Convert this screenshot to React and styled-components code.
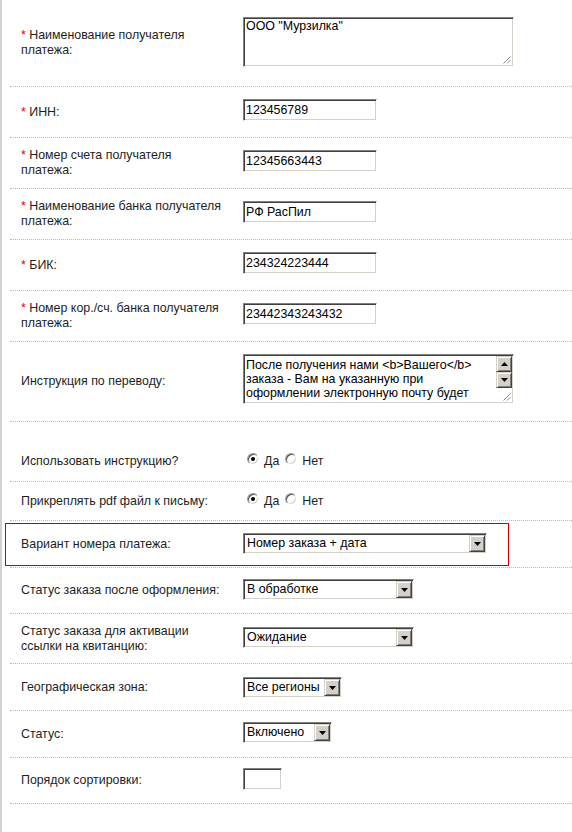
import React from 'react';
import styled, { createGlobalStyle, css } from 'styled-components';

const FONT = '"Liberation Sans", Arial, sans-serif';
const SIZE = '12.4px';

const Global = createGlobalStyle`
  html, body { margin: 0; padding: 0; background: #fff; }
  body {
    font-family: ${FONT};
    font-size: ${SIZE};
    color: #1e1e1e;
  }
  * { box-sizing: border-box; }
`;

const sunken = css`
  border: 1px solid;
  border-color: #808080 #fff #fff #808080;
  box-shadow: inset 1px 1px #404040, inset -1px -1px #d4d0c8;
  background: #fff;
`;

const raised = css`
  background: #d4d0c8;
  border: 1px solid;
  border-color: #d4d0c8 #404040 #404040 #d4d0c8;
  box-shadow: inset 1px 1px #fff, inset -1px -1px #808080;
`;

const Page = styled.div`
  width: 572px;
  min-height: 832px;
  border-left: 2px solid #d2d2d2;
  padding-left: 8px;
`;

const Shell = styled.div`
  border-bottom: 1px dotted #b8b8b8;
  padding: ${p => (p.$highlight ? '2px 0 1px' : '0')};
`;

const Cells = styled.div`
  display: grid;
  grid-template-columns: 222px 1fr;
  align-items: center;
  padding-left: 11px;
  padding-top: ${p => p.$extra || 0}px;
  ${p => p.$highlight && css`
    margin-left: -5px;
    margin-right: 63px;
    border: 1px solid #d40000;
    padding-left: 15px;
  `}
`;

const Label = styled.div`
  line-height: 15px;
  white-space: nowrap;
  color: #1e1e1e;
`;

const Star = styled.span`
  color: #ee0000;
`;

const Field = styled.div`
  display: flex;
  align-items: center;
  padding-top: ${p => p.$pt}px;
  padding-bottom: ${p => p.$pb}px;
`;

const TextInput = styled.input`
  ${sunken};
  width: ${p => p.$w}px;
  height: 22px;
  margin: 0;
  padding: 0 2px;
  font: ${SIZE} ${FONT};
  color: #000;
  outline: none;
`;

const AreaBox = styled.div`
  ${sunken};
  position: relative;
  display: flex;
  width: 271px;
  height: 50px;
  padding: 1px;
`;

const Area = styled.textarea`
  flex: 1;
  border: 0;
  margin: 0;
  padding: ${p => p.$pt}px 3px 0 1px;
  resize: none;
  overflow: hidden;
  background: transparent;
  outline: none;
  font: ${SIZE}/14px ${FONT};
  color: #000;
`;

const ScrollCol = styled.div`
  width: 16px;
  display: flex;
  flex-direction: column;
`;

const ScrollBtn = styled.div`
  ${raised};
  width: 16px;
  height: 16px;
  display: flex;
  align-items: center;
  justify-content: center;
`;

const Grip = styled.svg`
  position: absolute;
  right: 2px;
  bottom: 2px;
`;

const SelectBox = styled.div`
  ${sunken};
  display: flex;
  width: ${p => p.$w}px;
  height: 21px;
  padding: 1px;
`;

const SelectValue = styled.span`
  flex: 1;
  padding: 0 2px;
  line-height: 17px;
  white-space: nowrap;
  overflow: hidden;
  color: #000;
`;

const ArrowBtn = styled.span`
  ${raised};
  width: 16px;
  display: flex;
  align-items: center;
  justify-content: center;
`;

const RadioGroup = styled.div`
  display: flex;
  align-items: center;
  height: 16px;
`;

const Option = styled.label`
  display: inline-flex;
  align-items: center;
  margin-left: ${p => (p.$first ? 4 : 6)}px;
  color: #1e1e1e;
  line-height: 15px;
`;

const RadioDot = styled.span`
  position: relative;
  width: 12px;
  height: 12px;
  border-radius: 50%;
  border: 1px solid;
  border-color: #9a9a9a #fff #fff #9a9a9a;
  box-shadow: inset 1px 1px #505050, inset -1px -1px #d4d0c8;
  background: #fff;
  margin-right: 5px;
  margin-bottom: 5px;
  ${p => p.$on && css`
    &::after {
      content: "";
      position: absolute;
      left: 3px;
      top: 3px;
      width: 4px;
      height: 4px;
      border-radius: 50%;
      background: #000;
    }
  `}
`;

const Tri = ({ up }) => (
  <svg width="7" height="4" viewBox="0 0 7 4">
    <path d={up ? 'M3.5 0 L7 4 L0 4 Z' : 'M0 0 L7 0 L3.5 4 Z'} fill="#000" />
  </svg>
);

const ResizeGrip = () => (
  <Grip width="9" height="9" viewBox="0 0 9 9">
    <path d="M8.5 1.5 L1.5 8.5 M8.5 5 L5 8.5" stroke="#8a8a8a" strokeWidth="1" />
  </Grip>
);

const Select = ({ w, value }) => (
  <SelectBox $w={w}>
    <SelectValue>{value}</SelectValue>
    <ArrowBtn><Tri /></ArrowBtn>
  </SelectBox>
);

const Radios = () => (
  <RadioGroup>
    <Option $first><RadioDot $on />Да</Option>
    <Option><RadioDot />Нет</Option>
  </RadioGroup>
);

const Row = ({ label, req, pt, pb, extra, highlight, children }) => (
  <Shell $highlight={highlight}>
    <Cells $highlight={highlight} $extra={extra}>
      <Label>{req && <Star>* </Star>}{label}</Label>
      <Field $pt={pt} $pb={pb}>{children}</Field>
    </Cells>
  </Shell>
);

const instruction =
  'После получения нами <b>Вашего</b> заказа - Вам на указанную при оформлении электронную почту будет отправлена квитанция.';

export default function App() {
  return (
    <>
      <Global />
      <Page>
        <Row req label={<>Наименование получателя<br />платежа:</>} pt={17} pb={19}>
          <AreaBox>
            <Area $pt={0} defaultValue={'ООО "Мурзилка"'} />
            <ResizeGrip />
          </AreaBox>
        </Row>
        <Row req label="ИНН:" pt={12} pb={16}>
          <TextInput $w={134} defaultValue="123456789" />
        </Row>
        <Row req label={<>Номер счета получателя<br />платежа:</>} pt={12} pb={16}>
          <TextInput $w={134} defaultValue="12345663443" />
        </Row>
        <Row req label={<>Наименование банка получателя<br />платежа:</>} pt={12} pb={16}>
          <TextInput $w={134} defaultValue="РФ РасПил" />
        </Row>
        <Row req label="БИК:" pt={12} pb={16}>
          <TextInput $w={134} defaultValue="234324223444" />
        </Row>
        <Row req label={<>Номер кор./сч. банка получателя<br />платежа:</>} pt={12} pb={16}>
          <TextInput $w={134} defaultValue="23442343243432" />
        </Row>
        <Row label="Инструкция по переводу:" pt={12} pb={17}>
          <AreaBox>
            <Area $pt={2} defaultValue={instruction} />
            <ScrollCol>
              <ScrollBtn><Tri up /></ScrollBtn>
              <ScrollBtn><Tri /></ScrollBtn>
            </ScrollCol>
            <ResizeGrip />
          </AreaBox>
        </Row>
        <Row label="Использовать инструкцию?" extra={19} pt={12} pb={12}>
          <Radios />
        </Row>
        <Row label="Прикреплять pdf файл к письму:" pt={11} pb={11}>
          <Radios />
        </Row>
        <Row highlight label="Вариант номера платежа:" pt={9} pb={11}>
          <Select w={244} value="Номер заказа + дата" />
        </Row>
        <Row label="Статус заказа после оформления:" pt={11} pb={13}>
          <Select w={171} value="В обработке" />
        </Row>
        <Row label={<>Статус заказа для активации<br />ссылки на квитанцию:</>} pt={13} pb={15}>
          <Select w={171} value="Ожидание" />
        </Row>
        <Row label="Географическая зона:" pt={13} pb={12}>
          <Select w={99} value="Все регионы" />
        </Row>
        <Row label="Статус:" pt={11} pb={14}>
          <Select w={89} value="Включено" />
        </Row>
        <Row label="Порядок сортировки:" pt={10} pb={13}>
          <TextInput $w={39} defaultValue="" />
        </Row>
      </Page>
    </>
  );
}
